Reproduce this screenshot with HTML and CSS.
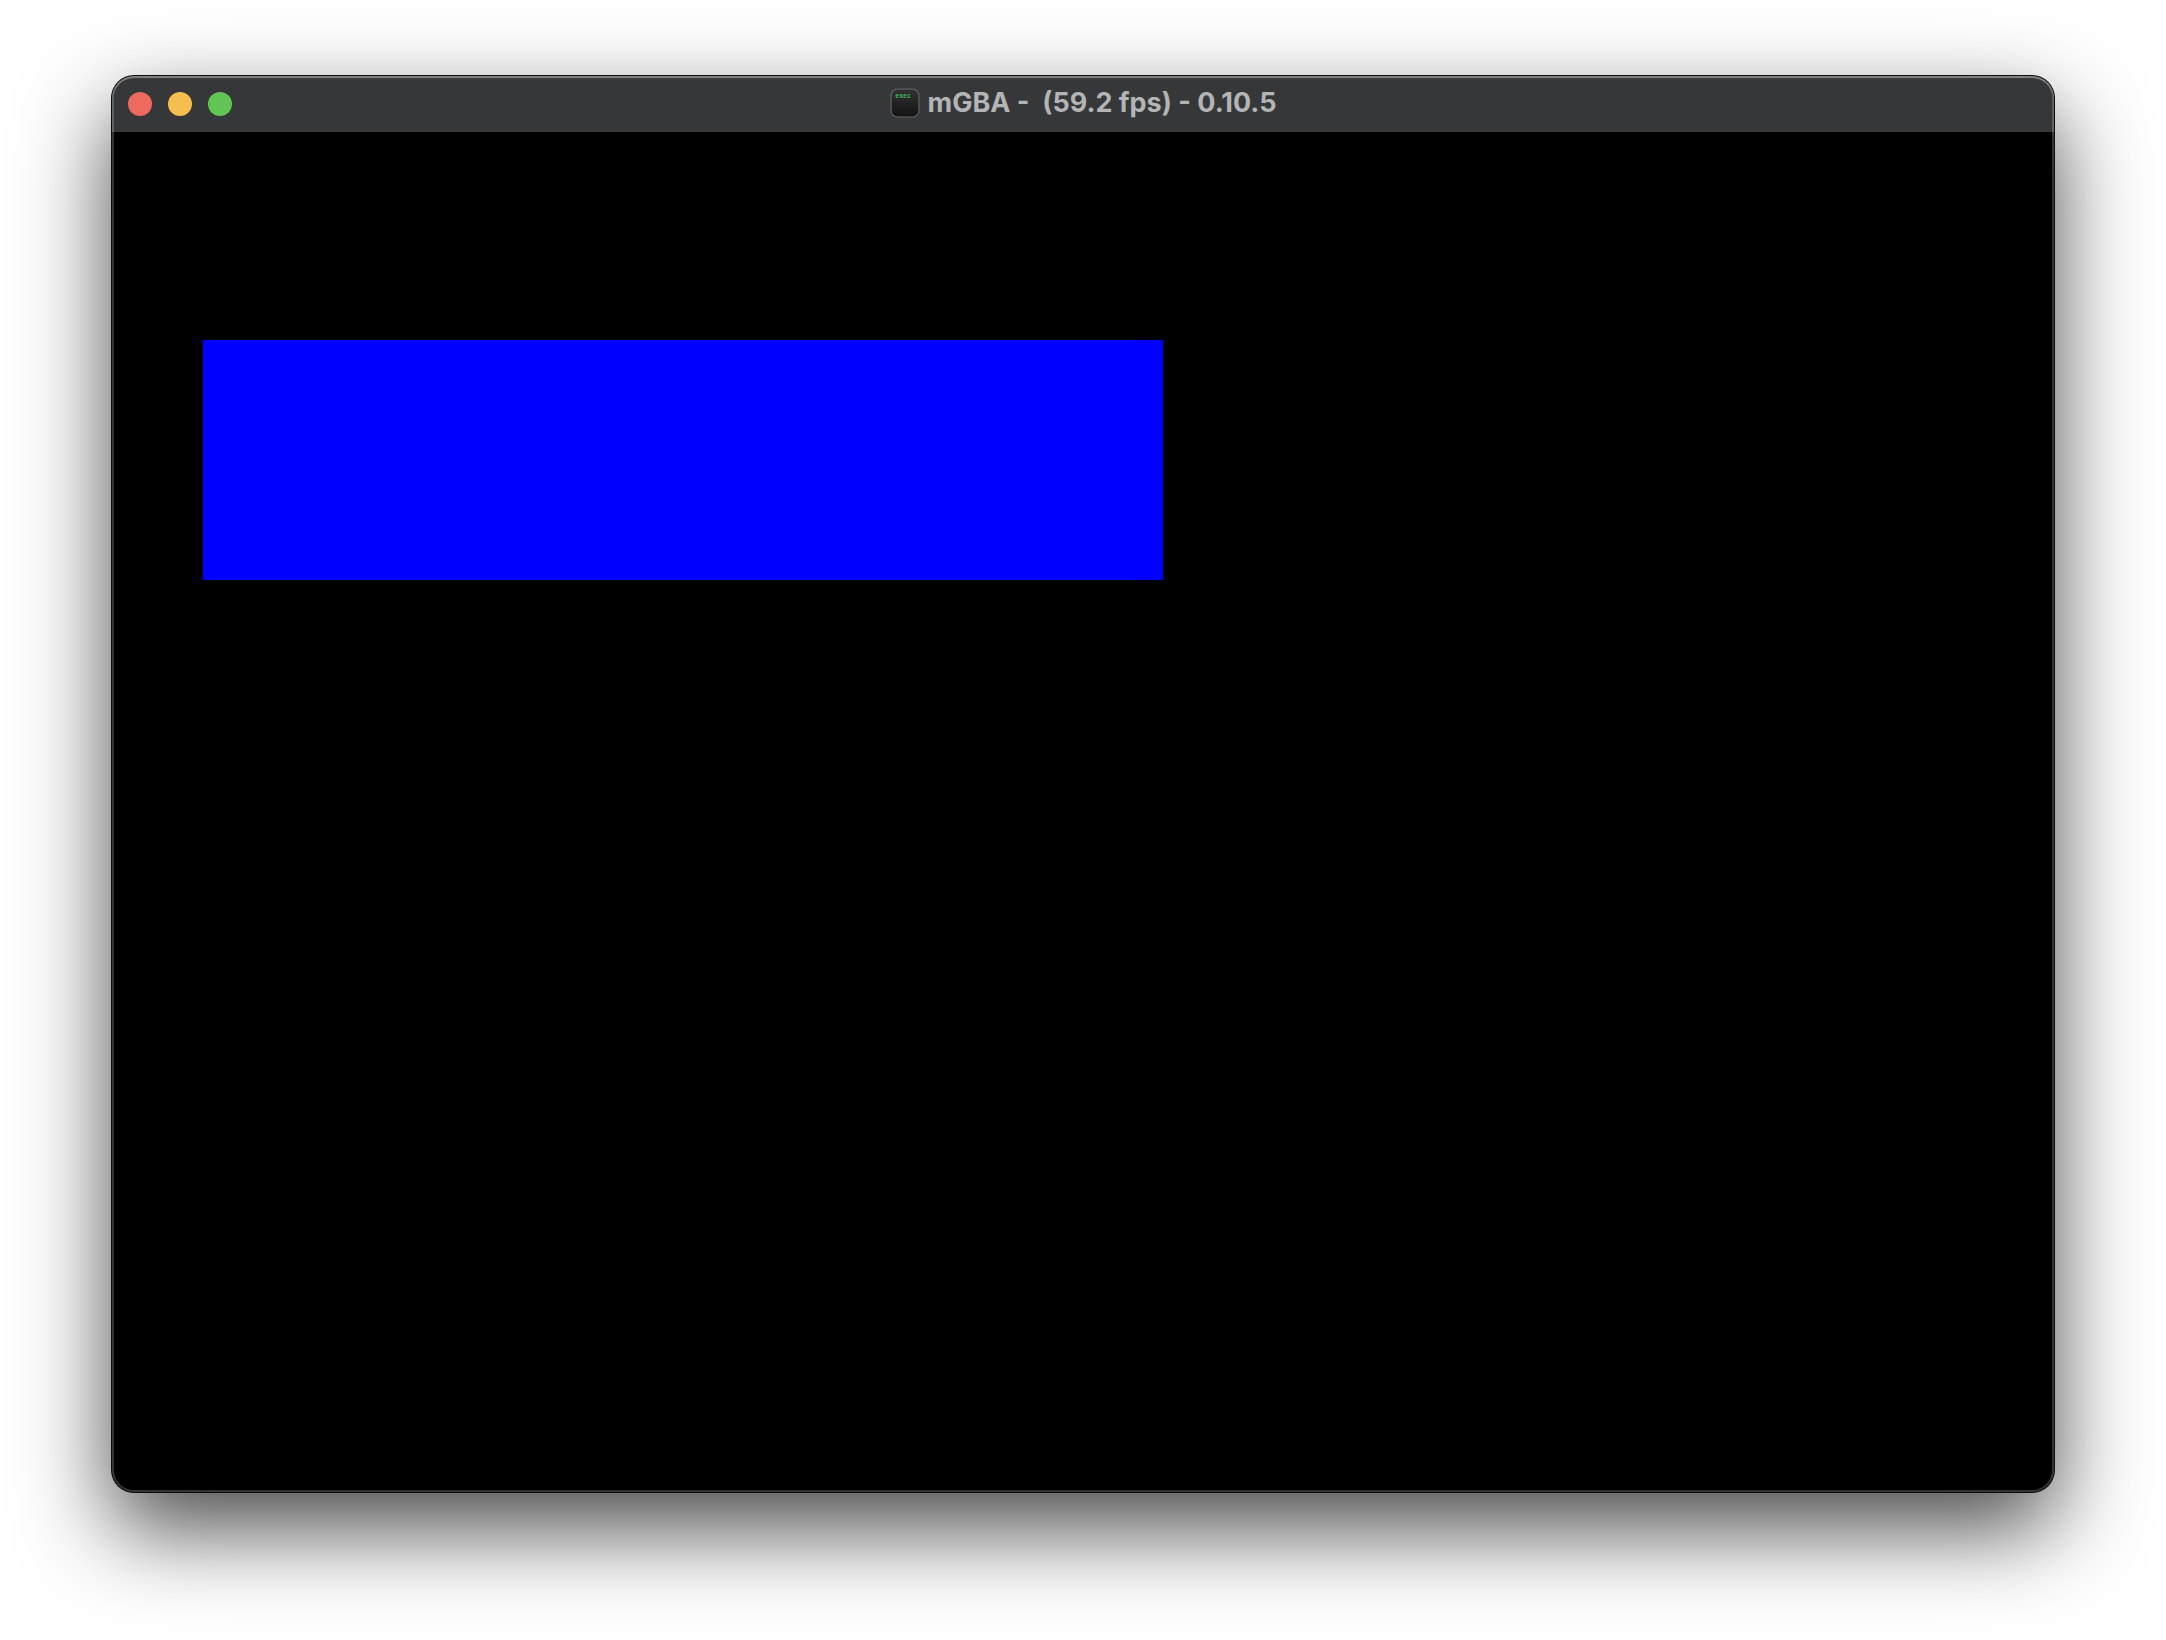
FILE: index.html
```html
<!DOCTYPE html>
<html lang="en">
<head>
    <meta charset="UTF-8">
    <title>mGBA</title>
    <link rel="stylesheet" href="styles.css">
</head>
<body>

    <div class="window">
        <header class="titlebar">
            <div class="controls">
                <button type="button" class="control close" aria-label="Close"></button>
                <button type="button" class="control minimize" aria-label="Minimize"></button>
                <button type="button" class="control zoom" aria-label="Zoom"></button>
            </div>
            <div class="title">
                <svg class="title_icon" viewBox="0 0 28 28" aria-hidden="true">
                    <defs>
                        <linearGradient id="icon_fill" x1="0" y1="0" x2="0" y2="1">
                            <stop offset="0" stop-color="#333"/>
                            <stop offset="1" stop-color="#121212"/>
                        </linearGradient>
                    </defs>
                    <rect x="1" y="1" width="26" height="26" rx="6" fill="url(#icon_fill)" stroke="#66676a"/>
                    <text x="5" y="9" class="icon_text">exec</text>
                </svg>
                <h1 class="title_text">mGBA -  (59.2 fps) - 0.10.5</h1>
            </div>
        </header>
        <main class="viewport">
            <div class="screen">
                <div class="block"></div>
            </div>
        </main>
    </div>

</body>
</html>
```

FILE: styles.css
```css
body {
    margin: 0;
    padding: 76px 112px 148px;
    box-sizing: border-box;
    min-height: 100vh;
    display: flex;
    background: #fff;
    font-family: Inter, "Liberation Sans", sans-serif;
}
.window {
    position: relative;
    flex: 1;
    display: flex;
    flex-direction: column;
    border-radius: 22px;
    background: #000;
    box-shadow: 0 0 0 1px #0c0c0c, 0 36px 90px rgba(0, 0, 0, 0.72);
}
/* light rim over the edge of the window */
.window::after {
    content: "";
    position: absolute;
    inset: 0;
    border-radius: 22px;
    box-shadow: inset 0 2px 1px rgba(255, 255, 255, 0.22), inset 0 0 0 2px rgba(255, 255, 255, 0.2);
    pointer-events: none;
}
.titlebar {
    display: grid;
    grid-template-columns: 1fr auto 1fr;
    align-items: center;
    height: 56px;
    padding: 0 16px;
    box-sizing: border-box;
    border-radius: 22px 22px 0 0;
    background: #363739;
}
.controls {
    display: flex;
    gap: 16px;
}
.control {
    width: 24px;
    height: 24px;
    padding: 0;
    border: none;
    border-radius: 50%;
}
.close {
    background: #ed6a5e;
}
.minimize {
    background: #f5bf4f;
}
.zoom {
    background: #61c554;
}
.title {
    display: flex;
    align-items: center;
    gap: 8px;
    padding-bottom: 2px;
}
.title_icon {
    width: 30px;
    height: 30px;
}
.icon_text {
    font-family: "Liberation Mono", monospace;
    font-size: 6px;
    font-weight: bold;
    fill: #3fb955;
}
.title_text {
    margin: 0;
    font-size: 27px;
    line-height: 32px;
    font-weight: 700;
    color: #b3b4b6;
    white-space: pre;
}
.viewport {
    flex: 1;
    display: flex;
    align-items: center;
    padding: 0 11px;
}
/* 240x160 screen */
.screen {
    width: 100%;
    aspect-ratio: 3 / 2;
    display: grid;
    grid-template-columns: 10fr 120fr 110fr;
    grid-template-rows: 21fr 30fr 109fr;
}
.block {
    grid-area: 2 / 2;
    background: #00f;
}
```
